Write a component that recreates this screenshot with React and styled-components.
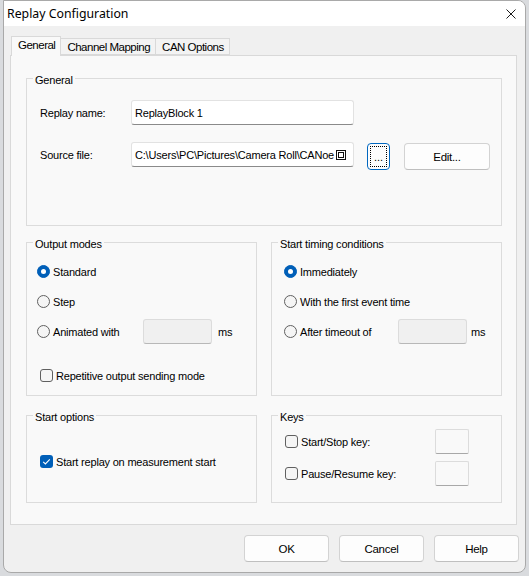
import React from 'react';
import styled, { createGlobalStyle } from 'styled-components';

const GlobalStyle = createGlobalStyle`
  html, body {
    margin: 0;
    padding: 0;
  }
  body {
    background: #d9dbde;
    font-family: "Liberation Sans", Arial, sans-serif;
    font-size: 11px;
    letter-spacing: -0.2px;
    color: #000;
  }
  * {
    box-sizing: border-box;
  }
`;

const App = () =>
  <>
    <GlobalStyle />
    <Window>
      <TitleBar>
        <Title>Replay Configuration</Title>
        <CloseIcon viewBox="0 0 10 10">
          <path d="M0.5 0.5 L9.5 9.5 M9.5 0.5 L0.5 9.5" />
        </CloseIcon>
      </TitleBar>
      <Body>
        <TabBar>
          <Tab $active>General</Tab>
          <Tab>Channel Mapping</Tab>
          <Tab>CAN Options</Tab>
        </TabBar>
        <Panel>
          <Group $h={148}>
            <Legend>General</Legend>
            <GroupBody $pad="13px 0 0 13px">
              <FormRow>
                <FieldLabel>Replay name:</FieldLabel>
                <TextField>ReplayBlock 1</TextField>
              </FormRow>
              <FormRow $mt={17}>
                <FieldLabel>Source file:</FieldLabel>
                <TextField>{"C:\\Users\\PC\\Pictures\\Camera Roll\\CANoe"}<MissingGlyph /></TextField>
                <BrowseButton><FocusRing>...</FocusRing></BrowseButton>
                <PushButton $w={86} $ml={14} $mt={1}>Edit...</PushButton>
              </FormRow>
            </GroupBody>
          </Group>

          <Columns $mt={16}>
            <Group $h={154}>
              <Legend>Output modes</Legend>
              <GroupBody $pad="8px 0 0 10px">
                <OptionRow>
                  <Radio $checked />
                  <OptionText>Standard</OptionText>
                </OptionRow>
                <OptionRow $mt={5}>
                  <Radio />
                  <OptionText>Step</OptionText>
                </OptionRow>
                <OptionRow $mt={5}>
                  <Radio />
                  <OptionText $w={90}>Animated with</OptionText>
                  <SmallField />
                  <Unit $ml={6}>ms</Unit>
                </OptionRow>
                <OptionRow $mt={19} $ml={3}>
                  <Checkbox />
                  <OptionText>Repetitive output sending mode</OptionText>
                </OptionRow>
              </GroupBody>
            </Group>
            <Group $h={154}>
              <Legend>Start timing conditions</Legend>
              <GroupBody $pad="8px 0 0 12px">
                <OptionRow>
                  <Radio $checked />
                  <OptionText>Immediately</OptionText>
                </OptionRow>
                <OptionRow $mt={5}>
                  <Radio />
                  <OptionText>With the first event time</OptionText>
                </OptionRow>
                <OptionRow $mt={5}>
                  <Radio />
                  <OptionText $w={98}>After timeout of</OptionText>
                  <SmallField />
                  <Unit $ml={4}>ms</Unit>
                </OptionRow>
              </GroupBody>
            </Group>
          </Columns>

          <Columns $mt={19}>
            <Group $h={88}>
              <Legend>Start options</Legend>
              <GroupBody $pad="25px 0 0 13px">
                <OptionRow>
                  <Checkbox $checked />
                  <OptionText>Start replay on measurement start</OptionText>
                </OptionRow>
              </GroupBody>
            </Group>
            <Group $h={88}>
              <Legend>Keys</Legend>
              <GroupBody $pad="5px 0 0 13px">
                <OptionRow>
                  <Checkbox />
                  <OptionText $w={134}>Start/Stop key:</OptionText>
                  <KeyField />
                </OptionRow>
                <OptionRow $mt={7}>
                  <Checkbox />
                  <OptionText $w={134}>Pause/Resume key:</OptionText>
                  <KeyField />
                </OptionRow>
              </GroupBody>
            </Group>
          </Columns>
        </Panel>
        <ButtonBar>
          <PushButton $w={85}>OK</PushButton>
          <PushButton $w={85}>Cancel</PushButton>
          <PushButton $w={85}>Help</PushButton>
        </ButtonBar>
      </Body>
    </Window>
  </>

export default App;

const Radio = ({$checked}) =>
  <RadioDot $checked={$checked} />

const Checkbox = ({$checked}) =>
  <CheckBox $checked={$checked}>
    {$checked &&
      <svg width="13" height="13" viewBox="0 0 13 13">
        <path d="M3.2 6.8 L5.4 9 L9.8 4.4" fill="none" stroke="#fff" strokeWidth="1.1" />
      </svg>}
  </CheckBox>

const Window = styled.div`
  width: 523px;
  height: 573px;
  margin-left: 3px;
  display: flex;
  flex-direction: column;
  background: #f0f0f0;
  border: 1px solid #a9a9a9;
  border-radius: 0 8px 8px 8px;
  overflow: hidden;
`

const TitleBar = styled.div`
  height: 25px;
  flex: none;
  display: flex;
  align-items: center;
  justify-content: space-between;
  padding: 0 9px 0 3px;
  background: #fff;
`

const Title = styled.span`
  font-family: "Noto Sans", "Liberation Sans", sans-serif;
  font-size: 12.3px;
  letter-spacing: 0;
  color: #000;
`

const CloseIcon = styled.svg`
  width: 10px;
  height: 10px;
  margin-top: 1px;
  stroke: #1a1a1a;
  stroke-width: 1;
  fill: none;
`

const Body = styled.div`
  flex: 1;
  display: flex;
  flex-direction: column;
  padding: 10px 8px 10px 6px;
`

const TabBar = styled.div`
  height: 19px;
  display: flex;
  align-items: flex-end;
  padding-left: 1px;
`

const Tab = styled.div`
  position: relative;
  z-index: ${p => p.$active ? 1 : 0};
  height: ${p => p.$active ? 20 : 17}px;
  margin-bottom: ${p => p.$active ? -1 : 0}px;
  padding: 0 5px ${p => p.$active ? 3 : 0}px 6px;
  display: flex;
  align-items: center;
  background: ${p => p.$active ? '#f9f9f9' : '#f3f3f3'};
  border: 1px solid #d9d9d9;
  border-bottom: ${p => p.$active ? 'none' : '1px solid #d9d9d9'};
  font-size: 11.5px;
  letter-spacing: -0.5px;

  & + & {
    margin-left: -1px;
  }
`

const Panel = styled.div`
  height: 470px;
  padding: 22px 14px 0 15px;
  background: #f9f9f9;
  border: 1px solid #d9d9d9;
`

const Group = styled.div`
  height: ${p => p.$h}px;
  border: 1px solid #dcdcdc;
`

const Legend = styled.div`
  width: fit-content;
  height: 13px;
  line-height: 13px;
  margin: -5px 0 0 6px;
  padding: 0 2px;
  background: #f9f9f9;
`

const GroupBody = styled.div`
  padding: ${p => p.$pad};
`

const Columns = styled.div`
  display: grid;
  grid-template-columns: 231px 231px;
  column-gap: 14px;
  margin-top: ${p => p.$mt}px;
`

const FormRow = styled.div`
  display: flex;
  align-items: flex-start;
  margin-top: ${p => p.$mt || 0}px;
`

const FieldLabel = styled.div`
  width: 91px;
  height: 25px;
  display: flex;
  align-items: center;
`

const TextField = styled.div`
  width: 223px;
  height: 25px;
  padding: 0 3px;
  display: flex;
  align-items: center;
  white-space: nowrap;
  overflow: hidden;
  background: #fff;
  border: 1px solid #e2e2e2;
  border-bottom-color: #8a8a8a;
  border-radius: 3px;
`

const MissingGlyph = styled.span`
  width: 10px;
  height: 10px;
  flex: none;
  margin-left: 2px;
  display: flex;
  align-items: center;
  justify-content: center;
  border: 1.5px solid #111;

  &::after {
    content: "";
    width: 4px;
    height: 4px;
    border: 1px solid #111;
  }
`

const BrowseButton = styled.div`
  width: 23px;
  height: 27px;
  margin: 1px 0 0 13px;
  padding: 2px;
  display: flex;
  background: #fdfdfd;
  border: 1px solid #0067c0;
  border-radius: 4px;
`

const FocusRing = styled.div`
  flex: 1;
  display: flex;
  align-items: center;
  justify-content: center;
  border: 1px dotted #000;
  letter-spacing: 0;
`

const PushButton = styled.div`
  width: ${p => p.$w}px;
  height: 27px;
  margin: ${p => p.$mt || 0}px 0 0 ${p => p.$ml || 0}px;
  display: flex;
  align-items: center;
  justify-content: center;
  background: #fdfdfd;
  border: 1px solid #d3d3d3;
  border-bottom-color: #bfbfbf;
  border-radius: 4px;
  font-size: 11.5px;
  letter-spacing: -0.3px;
`

const OptionRow = styled.div`
  height: 25px;
  display: flex;
  align-items: center;
  margin: ${p => p.$mt || 0}px 0 0 ${p => p.$ml || 0}px;
`

const RadioDot = styled.span`
  width: 13px;
  height: 13px;
  flex: none;
  display: flex;
  align-items: center;
  justify-content: center;
  border-radius: 50%;
  background: ${p => p.$checked ? '#005fb8' : '#f5f5f5'};
  border: 1px solid ${p => p.$checked ? '#005fb8' : '#606060'};

  &::after {
    content: "";
    display: ${p => p.$checked ? 'block' : 'none'};
    width: 5px;
    height: 5px;
    border-radius: 50%;
    background: #fff;
  }
`

const CheckBox = styled.span`
  width: 13px;
  height: 13px;
  flex: none;
  display: flex;
  border-radius: 3px;
  background: ${p => p.$checked ? '#005fb8' : '#f5f5f5'};
  border: ${p => p.$checked ? 'none' : '1px solid #606060'};
`

const OptionText = styled.span`
  width: ${p => p.$w ? `${p.$w}px` : 'auto'};
  flex: none;
  margin-left: 3px;
  white-space: nowrap;
`

const SmallField = styled.div`
  width: 69px;
  height: 25px;
  background: #f0f0f0;
  border: 1px solid #dcdcdc;
  border-bottom-color: #b8b8b8;
  border-radius: 3px;
`

const Unit = styled.span`
  margin-left: ${p => p.$ml}px;
`

const KeyField = styled.div`
  width: 34px;
  height: 25px;
  background: #f9f9f9;
  border: 1px solid #dcdcdc;
  border-bottom-color: #a8a8a8;
  border-radius: 2px;
`

const ButtonBar = styled.div`
  display: flex;
  justify-content: flex-end;
  gap: 10px;
  margin: 10px -2px 0 0;
`
